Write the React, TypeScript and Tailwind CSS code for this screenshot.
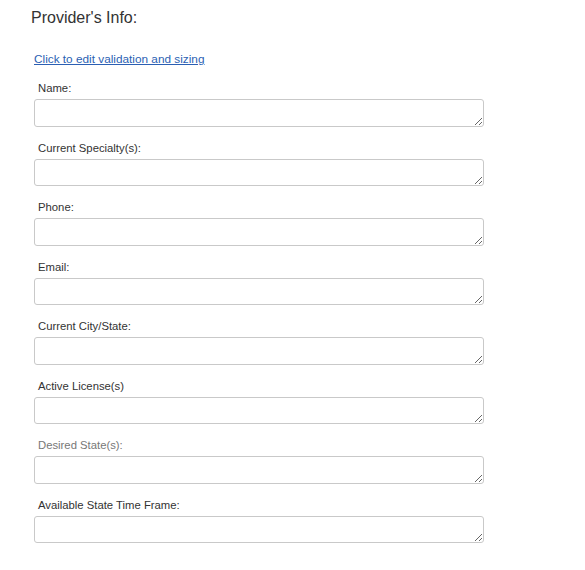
const fields = [
  { label: "Name:" },
  { label: "Current Specialty(s):" },
  { label: "Phone:" },
  { label: "Email:" },
  { label: "Current City/State:" },
  { label: "Active License(s)" },
  { label: "Desired State(s):", muted: true },
  { label: "Available State Time Frame:" },
];

export default function App() {
  return (
    <div className="min-h-screen bg-white font-['Liberation_Sans',Arial,sans-serif]">
      <h1 className="pl-[31px] pt-[8px] text-[16px] leading-[20px] text-[#333]">
        Provider's Info:
      </h1>

      <div className="pl-[34px] pt-[23px]">
        <a
          href="#"
          className="block w-fit text-[11.8px] leading-[16px] text-[#2b5fb3] underline"
        >
          Click to edit validation and sizing
        </a>

        <div>
          {fields.map((f) => (
            <div key={f.label} className="pt-[14px]">
              <label
                className={`block pl-[4px] text-[11.3px] leading-[14px] ${
                  f.muted ? "text-[#777]" : "text-[#333]"
                }`}
              >
                {f.label}
              </label>
              <textarea className="mt-[4px] block h-[27.5px] w-[450px] rounded-[3px] border border-[#c9c9c9] bg-white" />
            </div>
          ))}
        </div>
      </div>
    </div>
  );
}
